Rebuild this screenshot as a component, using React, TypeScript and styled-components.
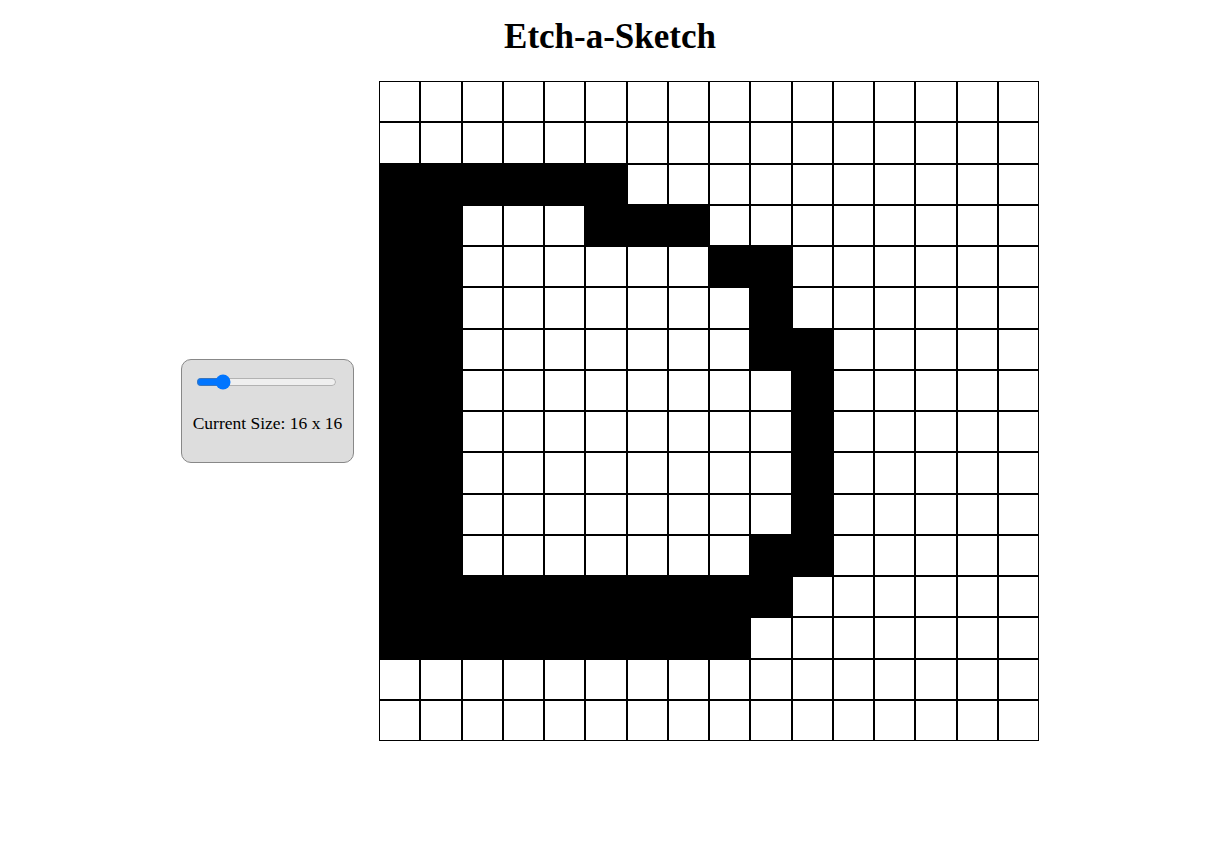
import React, { useState } from 'react';
import styled, { createGlobalStyle } from 'styled-components';

const GlobalStyle = createGlobalStyle`
  body {
    margin: 8px;
    font-family: "Liberation Serif", "Times New Roman", serif;
    background: #fff;
    color: #000;
  }
`;

const Title = styled.h1`
  margin: 9px 0 24px;
  font-size: 35px;
  line-height: 40px;
  font-weight: bold;
  text-align: center;
  padding-right: 6px;
`;

const Main = styled.div`
  display: flex;
  justify-content: center;
  align-items: center;
  gap: 25px;
  padding-right: 6px;
`;

const Panel = styled.div`
  box-sizing: border-box;
  width: 173px;
  height: 104px;
  padding: 12px 8px;
  display: flex;
  flex-direction: column;
  align-items: center;
  gap: 21px;
  background: #ddd;
  border: 1px solid #888;
  border-radius: 10px;
`;

const Slider = styled.input`
  width: 141px;
  margin: 2px 0 2px -2px;
`;

const SizeLabel = styled.p`
  margin: 0;
  font-size: 17.5px;
  line-height: 20px;
  white-space: nowrap;
`;

const Board = styled.div<{ $size: number }>`
  width: 660px;
  height: 660px;
  display: grid;
  grid-template-columns: repeat(${(p) => p.$size}, 1fr);
  grid-template-rows: repeat(${(p) => p.$size}, 1fr);
`;

const Cell = styled.div<{ $filled: boolean }>`
  box-sizing: border-box;
  border: 1px solid #000;
  background: ${(p) => (p.$filled ? '#000' : '#fff')};
`;

// filled cells of the drawing, row -> columns
const drawing: Record<number, number[]> = {
  2: [0, 1, 2, 3, 4, 5],
  3: [0, 1, 5, 6, 7],
  4: [0, 1, 8, 9],
  5: [0, 1, 9],
  6: [0, 1, 9, 10],
  7: [0, 1, 10],
  8: [0, 1, 10],
  9: [0, 1, 10],
  10: [0, 1, 10],
  11: [0, 1, 9, 10],
  12: [0, 1, 2, 3, 4, 5, 6, 7, 8, 9],
  13: [0, 1, 2, 3, 4, 5, 6, 7, 8],
};

export default function App(): React.JSX.Element {
  const [size, setSize] = useState(16);

  const cells = [];
  for (let r = 0; r < size; r++) {
    for (let c = 0; c < size; c++) {
      const filled = size === 16 && (drawing[r] ?? []).includes(c);
      cells.push(<Cell key={`${r}-${c}`} $filled={filled} />);
    }
  }

  return (
    <>
      <GlobalStyle />
      <Title>Etch-a-Sketch</Title>
      <Main>
        <Panel>
          <Slider
            type="range"
            min={1}
            max={100}
            value={size}
            onChange={(e) => setSize(Number(e.target.value))}
          />
          <SizeLabel>
            Current Size: {size} x {size}
          </SizeLabel>
        </Panel>
        <Board $size={size}>{cells}</Board>
      </Main>
    </>
  );
}
